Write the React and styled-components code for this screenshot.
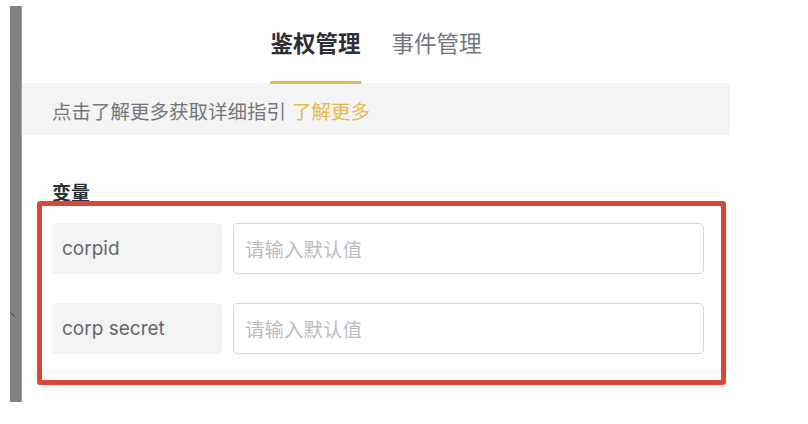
import React from "react";
import styled, { createGlobalStyle } from "styled-components";

const GlobalStyle = createGlobalStyle`
  body {
    margin: 0;
    background: #ffffff;
    font-family: Inter, "Noto Sans CJK SC", sans-serif;
  }
  * {
    box-sizing: border-box;
  }
`;

const variables = [
  { key: "corpid", label: "corpid" },
  { key: "corpsecret", label: "corp secret" }
];

const App = () => {
  return (
    <>
      <GlobalStyle />
      <Page>
        <SideBar>
          <Tick viewBox="0 0 5 5" width="5" height="5">
            <line x1="0.5" y1="0.5" x2="4.5" y2="4.5" stroke="#333" strokeWidth="1" />
          </Tick>
        </SideBar>
        <Panel>
          <Tabs>
            <Tab active>鉴权管理</Tab>
            <Tab>事件管理</Tab>
          </Tabs>
          <Notice>
            点击了解更多获取详细指引
            <NoticeLink href="#">了解更多</NoticeLink>
          </Notice>
          <SectionTitle>变量</SectionTitle>
          <Highlight>
            <VarGrid>
              {variables.map(v => (
                <React.Fragment key={v.key}>
                  <VarName>{v.label}</VarName>
                  <VarInput placeholder="请输入默认值" />
                </React.Fragment>
              ))}
            </VarGrid>
          </Highlight>
        </Panel>
      </Page>
    </>
  );
};

const Page = styled.div`
  display: flex;
  align-items: flex-start;
  padding: 6px 0 0 10px;
  width: 808px;
  height: 424px;
`;

const SideBar = styled.div`
  position: relative;
  width: 12px;
  height: 396px;
  background: #808080;
  border-right: 1px solid #a3a3a3;
  flex-shrink: 0;
`;

const Tick = styled.svg`
  position: absolute;
  left: 0;
  top: 306px;
`;

const Panel = styled.div`
  width: 708px;
  display: flex;
  flex-direction: column;
`;

const Tabs = styled.div`
  display: flex;
  justify-content: center;
  gap: 31px;
  height: 77px;
  padding-top: 21px;
`;

const Tab = styled.div`
  font-family: "Noto Sans CJK SC", sans-serif;
  font-size: 22.5px;
  line-height: 30px;
  height: 57px;
  padding-bottom: 24px;
  font-weight: ${p => (p.active ? 700 : 400)};
  color: ${p => (p.active ? "#2b2f36" : "#73777c")};
  border-bottom: 3px solid ${p => (p.active ? "#e8b94c" : "transparent")};
  position: relative;
  z-index: 1;
`;

const Notice = styled.div`
  display: flex;
  align-items: center;
  height: 52px;
  padding: 3px 0 0 30px;
  background: #f3f4f4;
  font-family: "Noto Sans CJK SC", sans-serif;
  font-size: 19.5px;
  color: #73777b;
`;

const NoticeLink = styled.a`
  margin-left: 6px;
  color: #e9b94b;
  text-decoration: none;
`;

const SectionTitle = styled.div`
  margin-top: 46px;
  padding-left: 30px;
  font-family: "Noto Sans CJK SC", sans-serif;
  font-size: 19px;
  line-height: 22px;
  font-weight: 700;
  color: #2b2f36;
`;

const Highlight = styled.div`
  position: relative;
  margin: -2px 0 0 15px;
  width: 689px;
  padding: 17px 17px 26px 9px;
  border: 5px solid #dc4538;
  border-radius: 3px;
`;

const VarGrid = styled.div`
  display: grid;
  grid-template-columns: 171px 1fr;
  column-gap: 11px;
  row-gap: 29px;
`;

const VarName = styled.div`
  display: flex;
  align-items: center;
  height: 51px;
  padding-left: 11px;
  background: #f3f4f4;
  border-radius: 5px;
  font-size: 19px;
  color: #65696d;
`;

const VarInput = styled.input`
  height: 51px;
  padding: 0 0 0 11px;
  border: 1px solid #d6d6d6;
  border-radius: 5px;
  font-family: "Noto Sans CJK SC", sans-serif;
  font-size: 19.5px;
  outline: none;
  &::placeholder {
    color: #bcbcbc;
  }
`;

export default App;
